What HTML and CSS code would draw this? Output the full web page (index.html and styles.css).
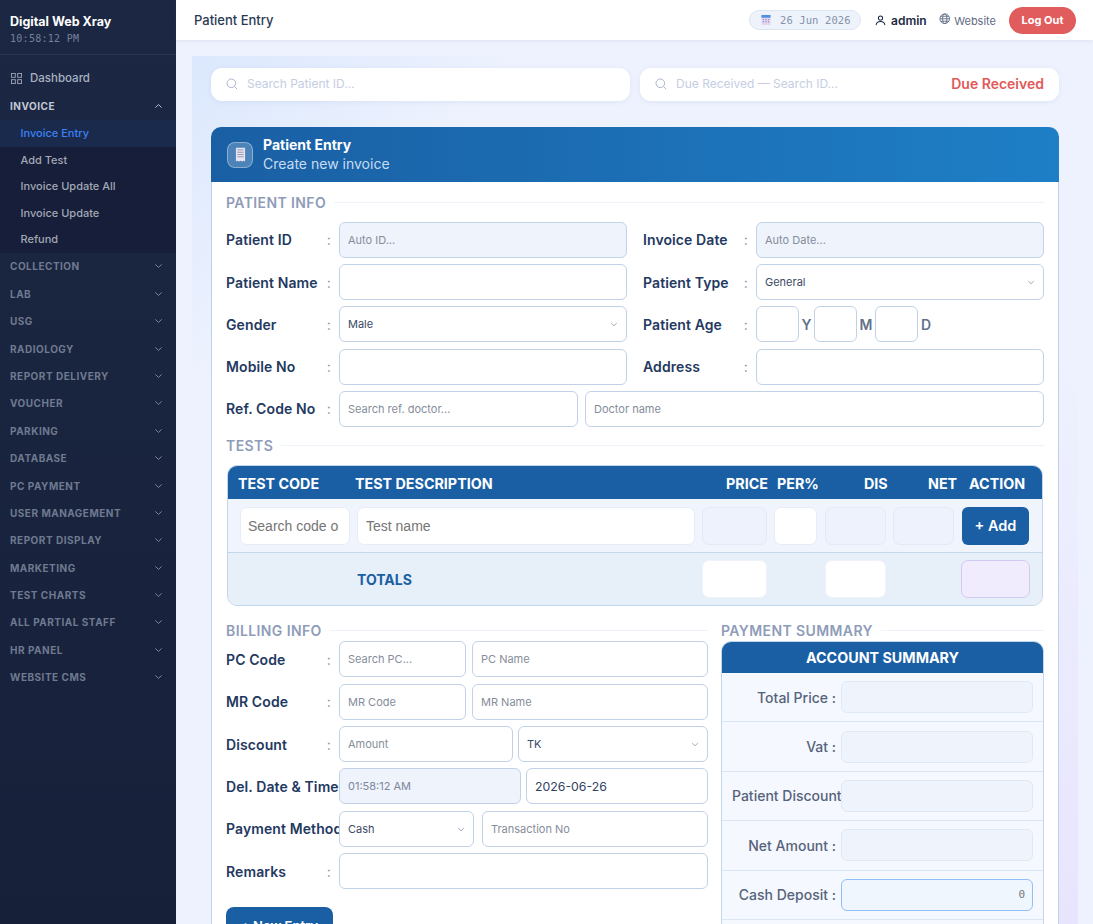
FILE: index.html
```html
<!DOCTYPE html>
<html lang="en">
<head>
<meta charset="utf-8">
<title>Patient Entry</title>
<link rel="stylesheet" href="styles.css">
</head>
<body>
<div class="app">
  <aside class="sidebar">
    <div class="brand">
      <div class="brand-name">Digital Web Xray</div>
      <div class="brand-clock">10:58:12 PM</div>
    </div>
    <nav class="nav">
      <a class="nav-dash">
        <svg class="dash-icon" viewBox="0 0 12 12" fill="none" stroke="currentColor" stroke-width="1"><rect x="0.5" y="0.5" width="4.2" height="4.2"/><rect x="7.3" y="0.5" width="4.2" height="4.2"/><rect x="0.5" y="7.3" width="4.2" height="4.2"/><rect x="7.3" y="7.3" width="4.2" height="4.2"/></svg>
        Dashboard
      </a>
      <div class="nav-group open"><span>INVOICE</span><svg class="chev" viewBox="0 0 10 6" fill="none" stroke="currentColor" stroke-width="1.1"><path d="M1.5 4.8 5 1.4l3.5 3.4"/></svg></div>
      <div class="subnav">
        <a class="active">Invoice Entry</a>
        <a>Add Test</a>
        <a>Invoice Update All</a>
        <a>Invoice Update</a>
        <a>Refund</a>
      </div>
      <div class="nav-group"><span>COLLECTION</span><svg class="chev" viewBox="0 0 10 6" fill="none" stroke="currentColor" stroke-width="1.1"><path d="M1.5 1.2 5 4.6l3.5-3.4"/></svg></div>
      <div class="nav-group"><span>LAB</span><svg class="chev" viewBox="0 0 10 6" fill="none" stroke="currentColor" stroke-width="1.1"><path d="M1.5 1.2 5 4.6l3.5-3.4"/></svg></div>
      <div class="nav-group"><span>USG</span><svg class="chev" viewBox="0 0 10 6" fill="none" stroke="currentColor" stroke-width="1.1"><path d="M1.5 1.2 5 4.6l3.5-3.4"/></svg></div>
      <div class="nav-group"><span>RADIOLOGY</span><svg class="chev" viewBox="0 0 10 6" fill="none" stroke="currentColor" stroke-width="1.1"><path d="M1.5 1.2 5 4.6l3.5-3.4"/></svg></div>
      <div class="nav-group"><span>REPORT DELIVERY</span><svg class="chev" viewBox="0 0 10 6" fill="none" stroke="currentColor" stroke-width="1.1"><path d="M1.5 1.2 5 4.6l3.5-3.4"/></svg></div>
      <div class="nav-group"><span>VOUCHER</span><svg class="chev" viewBox="0 0 10 6" fill="none" stroke="currentColor" stroke-width="1.1"><path d="M1.5 1.2 5 4.6l3.5-3.4"/></svg></div>
      <div class="nav-group"><span>PARKING</span><svg class="chev" viewBox="0 0 10 6" fill="none" stroke="currentColor" stroke-width="1.1"><path d="M1.5 1.2 5 4.6l3.5-3.4"/></svg></div>
      <div class="nav-group"><span>DATABASE</span><svg class="chev" viewBox="0 0 10 6" fill="none" stroke="currentColor" stroke-width="1.1"><path d="M1.5 1.2 5 4.6l3.5-3.4"/></svg></div>
      <div class="nav-group"><span>PC PAYMENT</span><svg class="chev" viewBox="0 0 10 6" fill="none" stroke="currentColor" stroke-width="1.1"><path d="M1.5 1.2 5 4.6l3.5-3.4"/></svg></div>
      <div class="nav-group"><span>USER MANAGEMENT</span><svg class="chev" viewBox="0 0 10 6" fill="none" stroke="currentColor" stroke-width="1.1"><path d="M1.5 1.2 5 4.6l3.5-3.4"/></svg></div>
      <div class="nav-group"><span>REPORT DISPLAY</span><svg class="chev" viewBox="0 0 10 6" fill="none" stroke="currentColor" stroke-width="1.1"><path d="M1.5 1.2 5 4.6l3.5-3.4"/></svg></div>
      <div class="nav-group"><span>MARKETING</span><svg class="chev" viewBox="0 0 10 6" fill="none" stroke="currentColor" stroke-width="1.1"><path d="M1.5 1.2 5 4.6l3.5-3.4"/></svg></div>
      <div class="nav-group"><span>TEST CHARTS</span><svg class="chev" viewBox="0 0 10 6" fill="none" stroke="currentColor" stroke-width="1.1"><path d="M1.5 1.2 5 4.6l3.5-3.4"/></svg></div>
      <div class="nav-group"><span>ALL PARTIAL STAFF</span><svg class="chev" viewBox="0 0 10 6" fill="none" stroke="currentColor" stroke-width="1.1"><path d="M1.5 1.2 5 4.6l3.5-3.4"/></svg></div>
      <div class="nav-group"><span>HR PANEL</span><svg class="chev" viewBox="0 0 10 6" fill="none" stroke="currentColor" stroke-width="1.1"><path d="M1.5 1.2 5 4.6l3.5-3.4"/></svg></div>
      <div class="nav-group"><span>WEBSITE CMS</span><svg class="chev" viewBox="0 0 10 6" fill="none" stroke="currentColor" stroke-width="1.1"><path d="M1.5 1.2 5 4.6l3.5-3.4"/></svg></div>
    </nav>
  </aside>

  <div class="main">
    <header class="topbar">
      <div class="top-title">Patient Entry</div>
      <div class="top-right">
        <div class="date-pill">
          <svg class="cal" viewBox="0 0 11 12"><rect x="0.5" y="0.5" width="10" height="11" fill="#e3d6f2"/><rect x="0.5" y="0.5" width="10" height="3" fill="#4f8fe0"/><g fill="#8a8fb8"><rect x="2" y="5" width="1.4" height="1.2"/><rect x="4.8" y="5" width="1.4" height="1.2"/><rect x="7.6" y="5" width="1.4" height="1.2"/><rect x="2" y="7.4" width="1.4" height="1.2"/><rect x="4.8" y="7.4" width="1.4" height="1.2"/><rect x="7.6" y="7.4" width="1.4" height="1.2"/></g></svg>
          <span>26 Jun 2026</span>
        </div>
        <div class="user">
          <svg class="user-icon" viewBox="0 0 12 12" fill="none" stroke="#1e2a44" stroke-width="1.1"><circle cx="6" cy="3.4" r="2.3"/><path d="M1.2 11c.3-2.7 2.3-3.8 4.8-3.8s4.500 1.100 4.800 3.800"/></svg>
          <span>admin</span>
        </div>
        <a class="website">
          <svg class="globe" viewBox="0 0 12 12" fill="none" stroke="#5a6780" stroke-width="0.9"><circle cx="6" cy="6" r="5"/><ellipse cx="6" cy="6" rx="2.200" ry="5"/><path d="M1 6h10M1.700 3.400h8.600M1.700 8.600h8.600"/></svg>
          <span>Website</span>
        </a>
        <button class="logout">Log Out</button>
      </div>
    </header>

    <div class="content">
      <div class="search-row">
        <label class="search-box">
          <svg class="search-icon" viewBox="0 0 12 12" fill="none" stroke="#a9b6cf" stroke-width="1"><circle cx="5.300" cy="5.300" r="4.300"/><path d="m8.500 8.500 2.700 2.700"/></svg>
          <input class="search-input" placeholder="Search Patient ID…">
        </label>
        <label class="search-box">
          <svg class="search-icon" viewBox="0 0 12 12" fill="none" stroke="#a9b6cf" stroke-width="1"><circle cx="5.300" cy="5.300" r="4.300"/><path d="m8.500 8.500 2.700 2.700"/></svg>
          <input class="search-input" placeholder="Due Received — Search ID…">
          <span class="due-label">Due Received</span>
        </label>
      </div>

      <section class="card">
        <div class="card-head">
          <div class="head-icon">
            <svg viewBox="0 0 12 16" class="doc"><path d="M1 0.500h10v15l-1.600-.8-1.700.8-1.700-.8-1.700.8-1.700-.8L1 15.500z" fill="#e9e4f3"/><g fill="#8d96ad"><rect x="2.500" y="2.500" width="7" height="1"/><rect x="2.500" y="5" width="7" height="1"/><rect x="2.500" y="7.500" width="7" height="1"/><rect x="2.500" y="10" width="7" height="1"/></g></svg>
          </div>
          <div>
            <div class="head-title">Patient Entry</div>
            <div class="head-sub">Create new invoice</div>
          </div>
        </div>

        <div class="card-body">
          <div class="section-title first"><span>PATIENT INFO</span></div>
          <div class="info-grid">
            <div class="field"><label class="lbl">Patient ID<i>:</i></label><input class="inp ro" placeholder="Auto ID..."></div>
            <div class="field"><label class="lbl">Invoice Date<i>:</i></label><input class="inp ro" placeholder="Auto Date..."></div>
            <div class="field"><label class="lbl">Patient Name<i>:</i></label><input class="inp"></div>
            <div class="field"><label class="lbl">Patient Type<i>:</i></label><div class="sel"><span>General</span><svg class="sel-chev" viewBox="0 0 10 6" fill="none" stroke="#8a97ad" stroke-width="1"><path d="M1.500 1.200 5 4.600l3.500-3.400"/></svg></div></div>
            <div class="field"><label class="lbl">Gender<i>:</i></label><div class="sel"><span>Male</span><svg class="sel-chev" viewBox="0 0 10 6" fill="none" stroke="#8a97ad" stroke-width="1"><path d="M1.500 1.200 5 4.600l3.500-3.400"/></svg></div></div>
            <div class="field"><label class="lbl">Patient Age<i>:</i></label>
              <div class="age"><input class="inp"><b class="unit-y">Y</b><input class="inp"><b class="unit-m">M</b><input class="inp"><b class="unit-d">D</b></div>
            </div>
            <div class="field"><label class="lbl">Mobile No<i>:</i></label><input class="inp"></div>
            <div class="field"><label class="lbl">Address<i>:</i></label><input class="inp"></div>
            <div class="field wide"><label class="lbl">Ref. Code No<i>:</i></label>
              <div class="pair ref"><input class="inp" placeholder="Search ref. doctor..."><input class="inp" placeholder="Doctor name"></div>
            </div>
          </div>

          <div class="section-title tests"><span>TESTS</span></div>
          <div class="test-table">
            <div class="test-head">
              <span class="th-code">TEST CODE</span>
              <span class="th-desc">TEST DESCRIPTION</span>
              <span class="th-price">PRICE</span>
              <span class="th-per">PER%</span>
              <span class="th-dis">DIS</span>
              <span class="th-net">NET</span>
              <span>ACTION</span>
            </div>
            <div class="test-row">
              <input class="cell code" placeholder="Search code or name">
              <input class="cell" placeholder="Test name">
              <input class="cell dim">
              <input class="cell">
              <input class="cell dim nudge">
              <input class="cell dim">
              <button class="add-btn nudge">+ Add</button>
            </div>
            <div class="test-row totals">
              <span class="totals-label">TOTALS</span>
              <input class="cell plain">
              <span></span>
              <input class="cell plain nudge">
              <span></span>
              <input class="cell net-total">
            </div>
          </div>

          <div class="lower">
            <div class="billing">
              <div class="section-title bill"><span>BILLING INFO</span></div>
              <div class="bill-rows">
                <div class="field"><label class="lbl">PC Code<i>:</i></label><div class="pair pc"><input class="inp" placeholder="Search PC..."><input class="inp" placeholder="PC Name"></div></div>
                <div class="field"><label class="lbl">MR Code<i>:</i></label><div class="pair pc"><input class="inp" placeholder="MR Code"><input class="inp" placeholder="MR Name"></div></div>
                <div class="field"><label class="lbl">Discount<i>:</i></label><div class="pair disc"><input class="inp" placeholder="Amount"><div class="sel"><span>TK</span><svg class="sel-chev" viewBox="0 0 10 6" fill="none" stroke="#8a97ad" stroke-width="1"><path d="M1.500 1.200 5 4.600l3.500-3.400"/></svg></div></div></div>
                <div class="field"><label class="lbl clip">Del. Date &amp; Time</label><div class="pair deld"><input class="inp ro val-ro" value="01:58:12 AM"><input class="inp val" value="2026-06-26"></div></div>
                <div class="field"><label class="lbl clip">Payment Method</label><div class="pair pay"><div class="sel"><span>Cash</span><svg class="sel-chev" viewBox="0 0 10 6" fill="none" stroke="#8a97ad" stroke-width="1"><path d="M1.500 1.200 5 4.600l3.500-3.400"/></svg></div><input class="inp" placeholder="Transaction No"></div></div>
                <div class="field"><label class="lbl">Remarks<i>:</i></label><input class="inp"></div>
              </div>
              <button class="new-entry">+ New Entry</button>
            </div>
            <div class="payment">
              <div class="section-title pay-title"><span>PAYMENT SUMMARY</span></div>
              <div class="summary">
                <div class="summary-head">ACCOUNT SUMMARY</div>
                <div class="sum-row"><label class="sum-lbl">Total Price :</label><input class="sum-inp"></div>
                <div class="sum-row"><label class="sum-lbl">Vat :</label><input class="sum-inp"></div>
                <div class="sum-row"><label class="sum-lbl">Patient Discount :</label><input class="sum-inp"></div>
                <div class="sum-row"><label class="sum-lbl">Net Amount :</label><input class="sum-inp"></div>
                <div class="sum-row"><label class="sum-lbl">Cash Deposit :</label><input class="sum-inp active-inp" value="0"></div>
                <div class="sum-row"><label class="sum-lbl"></label><input class="sum-inp"></div>
              </div>
            </div>
          </div>
        </div>
      </section>
    </div>
  </div>
</div>
</body>
</html>
```

FILE: styles.css
```css
* { box-sizing: border-box; }
html, body { margin: 0; height: 100%; overflow: hidden; }
body { font-family: "Inter", "Liberation Sans", sans-serif; color: #1e3054; background: #eef2fe; }
.app { display: flex; height: 924px; overflow: hidden; }

.sidebar { width: 176px; flex: none; background: linear-gradient(180deg, #1b2743 0%, #172039 100%); }
.brand { height: 55px; padding: 14px 10px 0; border-bottom: 1px solid #2a3650; }
.brand-name { font-size: 12.5px; font-weight: 700; color: #fff; line-height: 16px; }
.brand-clock { font-family: "DejaVu Sans Mono", monospace; font-size: 10px; color: #77819a; line-height: 14px; margin-top: 2px; letter-spacing: .28px; }
.nav { padding-top: 9px; display: flex; flex-direction: column; }
.nav-dash { display: flex; align-items: center; gap: 8px; height: 28.3px; padding-left: 11px; font-size: 11.5px; font-weight: 500; color: #aab2c1; }
.dash-icon { width: 11px; height: 11px; color: #9aa3b4; }
.nav-group { display: flex; align-items: center; justify-content: space-between; height: 27.4px; padding: 0 13px 0 10px; font-size: 10px; font-weight: 700; letter-spacing: .5px; color: #6f7a90; }
.nav-group.open { color: #c3cad6; height: 27.7px; }
.chev { width: 9px; height: 6px; color: #7a8598; }
.nav-group.open .chev { color: #b7bfcc; }
.subnav { background: #161e39; display: flex; flex-direction: column; }
.subnav a { display: flex; align-items: center; height: 26.55px; padding-left: 20.500px; font-size: 11px; font-weight: 500; color: #a2a8b6; }
.subnav a.active { background: #1a2a4d; color: #3b82f6; }

.main { flex: 1; min-width: 0; display: flex; flex-direction: column; }
.topbar { height: 40px; flex: none; background: #fff; display: flex; align-items: center; justify-content: space-between; padding: 0 17px 0 18px; box-shadow: 0 1px 4px rgba(90, 110, 160, .12); position: relative; }
.top-title { font-size: 13px; font-weight: 500; color: #2a3a55; }
.top-right { display: flex; align-items: center; }
.date-pill { display: flex; align-items: center; gap: 9px; width: 112px; height: 20px; padding-left: 11px; border-radius: 10px; background: #eef2fb; border: 1px solid #dde5f3; font-family: "DejaVu Sans Mono", monospace; font-size: 10.5px; letter-spacing: .1px; color: #8592ab; }
.cal { width: 10px; height: 12px; flex: none; }
.user { display: flex; align-items: center; gap: 5px; margin-left: 14px; font-size: 12px; font-weight: 600; color: #1e2a44; }
.user-icon { width: 11px; height: 11px; }
.website { display: flex; align-items: center; gap: 4px; margin-left: 12px; padding-top: 1px; font-size: 11px; color: #5f6c84; }
.globe { width: 11.500px; height: 11.500px; margin-top: -3px; }
.logout { margin-left: 13px; width: 67px; height: 27px; border: 0; border-radius: 14px; background: #e15c5c; color: #fff; font: 700 11px "Inter", sans-serif; padding: 0; }

.content { flex: 1; margin: 16px 15px 0 16px; padding: 12px 19px 0; background: linear-gradient(135deg, #dbe8fd 0, #eef2fe 240px, #eef2fe 800px, #e8e4fd 1240px); overflow: hidden; }
.search-row { display: grid; grid-template-columns: 419px 419px; gap: 10px; }
.search-box { height: 32.500px; display: flex; align-items: center; padding: 0 15px 1px; background: #fff; border-radius: 11px; box-shadow: 0 1px 5px rgba(110, 135, 190, .12); }
.search-icon { width: 12px; height: 12px; flex: none; margin-right: 9px; }
.search-input { flex: 1; min-width: 0; border: 0; outline: 0; padding: 0; font: 400 12px "Inter", sans-serif; background: none; }
.search-input::placeholder { color: #c4cee2; opacity: 1; }
.due-label { font-size: 14px; font-weight: 600; color: #e05a5a; white-space: nowrap; }

.card { margin-top: 26.500px; width: 848px; height: 900px; border-radius: 10px 10px 0 0; overflow: hidden; }
.card-head { height: 55px; display: flex; align-items: center; gap: 10px; padding: 0 16px; background: linear-gradient(90deg, #1a5fa4 0%, #1e7fc6 100%); }
.head-icon { width: 26px; height: 26px; display: flex; align-items: center; justify-content: center; border-radius: 8px; background: rgba(255, 255, 255, .22); border: 1px solid rgba(255, 255, 255, .35); }
.doc { width: 11px; height: 15px; }
.head-title { font-size: 14px; font-weight: 700; color: #fff; line-height: 18px; }
.head-sub { font-size: 14px; color: #c7dcf1; line-height: 19px; }
.card-body { height: 845px; background: #fff; padding: 0 14px; border-left: 1px solid #bdd2ea; border-right: 1px solid #bdd2ea; overflow: hidden; }

.section-title { display: flex; align-items: center; gap: 8px; height: 16px; font-size: 14px; font-weight: 600; letter-spacing: .4px; color: #8f9cb9; white-space: nowrap; }
.section-title::after { content: ""; flex: 1; height: 1px; background: #eef2f9; }
.section-title.first { margin-top: 12px; }
.section-title.tests { margin-top: 10.600px; }

.info-grid { margin-top: 11.800px; display: grid; grid-template-columns: 401px 401px; column-gap: 16px; row-gap: 6.250px; }
.field { display: flex; align-items: center; height: 36px; }
.field.wide { grid-column: 1 / 3; }
.lbl { flex: 0 0 113px; display: flex; justify-content: space-between; padding-right: 8px; font-size: 14px; font-weight: 600; color: #24395f; white-space: nowrap; letter-spacing: .1px; }
.lbl i { font-style: normal; font-weight: 400; color: #8592a8; }
.lbl.clip { overflow: hidden; padding-right: 0; }
.inp { flex: 1; min-width: 0; width: 100%; height: 36px; border: 1px solid #c1d2e8; border-radius: 6px; background: #fff; padding: 0 8px; font: 400 11px "Inter", sans-serif; color: #2a3a55; outline: 0; }
.inp::placeholder { color: #858d9b; opacity: 1; }
.inp.ro { background: #eff3fb; }
.inp.ro.val-ro { color: #7b879c; }
.inp.val { font-size: 12.300px; color: #33425f; }
.sel { position: relative; flex: 1; min-width: 0; height: 36px; display: flex; align-items: center; border: 1px solid #c1d2e8; border-radius: 6px; background: #fff; padding: 0 8px; font-size: 11px; color: #3b4a66; }
.sel-chev { position: absolute; right: 8px; top: 15px; width: 8px; height: 5px; }
.pair { flex: 1; min-width: 0; display: flex; }
.pair .inp, .pair .sel { flex: none; }
.ref { gap: 7px; }
.ref .inp:first-child { width: 239px; }
.ref .inp:last-child { flex: 1; width: auto; }
.pc { gap: 6px; }
.pc .inp:first-child { width: 127px; }
.pc .inp:last-child { flex: 1; width: auto; }
.disc { gap: 5px; }
.disc .inp { width: 174px; }
.disc .sel { flex: 1; }
.deld { gap: 5px; }
.deld .inp { width: 182px; padding-right: 4px; }
.pay { gap: 8px; }
.pay .sel { width: 135px; }
.pay .inp { flex: 1; width: auto; }
.age { flex: 1; display: flex; align-items: center; }
.age .inp { flex: none; width: 43px; padding: 0; }
.age b { font-size: 14px; font-weight: 600; color: #63718b; text-align: center; }
.unit-y { width: 15px; }
.unit-m { width: 18px; }
.unit-d { margin-left: 3px; }

.test-table { margin-top: 12px; margin-left: 1px; width: 816px; border: 1px solid #c4d6ec; border-radius: 10px; overflow: hidden; background: #f0f5fd; }
.test-head { height: 33px; background: #1a5fa4; display: flex; align-items: center; padding: 1px 0 0 10px; font-size: 14.300px; font-weight: 700; color: #fff; white-space: nowrap; }
.th-code { width: 117px; }
.th-desc { width: 371px; }
.th-price { width: 51px; }
.th-per { width: 87px; }
.th-dis { width: 64px; }
.th-net { width: 41px; }
.test-row { display: grid; grid-template-columns: 110px 338px 65px 43px 62px 61px 68px; column-gap: 7px; align-items: center; padding: 7px 0 7px 12px; height: 53px; }
.test-row.totals { height: 53px; background: #e7eff8; border-top: 1px solid #c4d6ec; grid-template-columns: 455px 65px 43px 62px 61px 69px; }
.nudge { margin-left: 1px; width: calc(100% - 1px) !important; }
.cell { width: 100%; min-width: 0; height: 38px; border: 1px solid #e6edf8; border-radius: 7px; background: #fff; padding: 0 8px; font: 400 14px "Liberation Sans", sans-serif; color: #333; outline: 0; }
.cell.code { padding: 0 10px 0 7px; }
.cell::placeholder { color: #757575; opacity: 1; }
.cell.dim { background: #eef2fc; border-color: #e3e9f7; }
.cell.plain { border-color: #f0f4fa; }
.net-total { background: #f0ecfd; border-color: #d2caf3; }
.totals-label { padding-left: 117px; font-size: 14px; font-weight: 700; color: #1a5fa4; }
.add-btn { height: 38px; border: 0; border-radius: 6px; background: #1a5fa4; color: #fff; font: 600 14.500px "Inter", sans-serif; padding: 0; }

.lower { margin-top: 16.600px; display: grid; grid-template-columns: 482px 323px; column-gap: 13px; }
.bill-rows { margin-top: 2.300px; display: flex; flex-direction: column; gap: 6.400px; }
.new-entry { display: block; margin-top: 18px; width: 107px; height: 38px; border: 0; border-radius: 8px; background: #1a5fa4; color: #fff; font: 600 13px "Inter", sans-serif; padding: 0; }
.summary { margin-top: 2px; border: 1px solid #c4d6ec; border-radius: 10px 10px 0 0; overflow: hidden; background: #f5f8fe; }
.summary-head { height: 31px; background: #1a5fa4; color: #fff; font-size: 14.300px; font-weight: 700; display: flex; align-items: center; justify-content: center; }
.sum-row { display: flex; align-items: center; height: 49.400px; border-bottom: 1px solid #dce6f3; }
.sum-lbl { flex: 0 0 119px; padding: 0 5px 0 10px; overflow: hidden; text-align: right; font-size: 14px; font-weight: 500; color: #56637a; white-space: nowrap; }
.sum-inp { width: 192px; height: 32px; border: 1px solid #dfe9f5; border-radius: 6px; background: #eff4fc; padding: 0 7px; text-align: right; font: 400 11px "DejaVu Sans Mono", monospace; color: #777; outline: 0; }
.active-inp { border-color: #90c0f5; background: #f0f6fe; }
```
